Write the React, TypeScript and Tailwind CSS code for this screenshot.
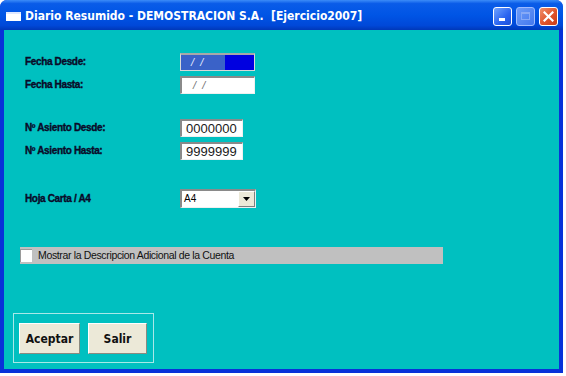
import React from "react";

const Label = ({ children }: { children: React.ReactNode }) => (
  <div
    className="w-[155px] shrink-0 text-[10px] font-bold text-[#0a0a28] leading-none tracking-[-0.35px] [-webkit-text-stroke:0.35px_#0a0a28]"
    style={{ fontFamily: '"Liberation Sans", Arial, sans-serif' }}
  >
    {children}
  </div>
);

const Sunken = ({ className, children }: { className: string; children?: React.ReactNode }) => (
  <div className={`border-t-2 border-l-2 border-t-[#8a8a8a] border-l-[#8a8a8a] border-b border-r border-b-[#f0f0f0] border-r-[#f0f0f0] ${className}`}>
    {children}
  </div>
);

export default function App() {
  return (
    <div className="w-[566px] h-[376px] bg-white" style={{ fontFamily: '"Liberation Sans", Arial, sans-serif' }}>
      <div className="w-[563px] h-[373px] flex flex-col rounded-t-[7px] bg-[#0831d9] overflow-hidden">
        {/* Title bar */}
        <div className="h-[30px] shrink-0 flex items-center bg-[linear-gradient(180deg,#3c8cf8_0%,#0a5ce8_12%,#0055e5_50%,#0048d8_85%,#0038b8_100%)] pl-[6px] pr-[4px]">
          <div className="w-[15px] h-[9px] bg-white border-t-2 border-t-[#dfe8ff] mt-[2px]" />
          <div className="ml-[4px] text-white text-[12px] font-bold whitespace-pre mt-[2px]" style={{ fontFamily: '"DejaVu Sans Condensed", "Liberation Sans", sans-serif' }}>
            Diario Resumido - DEMOSTRACION S.A.  [Ejercicio2007]
          </div>
          <div className="ml-auto flex gap-[4px] mt-[2px] mr-[1px]">
            <div className="w-[19px] h-[19px] rounded-[3px] border border-white bg-[linear-gradient(135deg,#6fa4ff,#2a64f0_60%,#1c4fd8)] flex items-end justify-start pl-[5px] pb-[4px]">
              <div className="w-[6px] h-[3px] bg-white" />
            </div>
            <div className="w-[19px] h-[19px] rounded-[3px] border border-[#9fbcff] bg-[linear-gradient(135deg,#6c9cf8,#4478ee)] flex items-center justify-center">
              <div className="w-[9px] h-[8px] border border-[#86a9f6] border-t-2" />
            </div>
            <div className="w-[19px] h-[19px] rounded-[3px] border border-white bg-[linear-gradient(135deg,#f0906c,#e0542c_55%,#c83c18)] flex items-center justify-center">
              <svg width="11" height="11" viewBox="0 0 11 11">
                <path d="M1.5 1.5 L9.5 9.5 M9.5 1.5 L1.5 9.5" stroke="white" strokeWidth="2.2" strokeLinecap="square" />
              </svg>
            </div>
          </div>
        </div>

        {/* Body */}
        <div className="flex-1 mx-[4px] mb-[4px] bg-[#00c0c0] pl-[21px] flex flex-col">
          {/* Fecha Desde */}
          <div className="flex items-center mt-[23px] h-[18px]">
            <Label>Fecha Desde:</Label>
            <div className="w-[75px] h-[18px] border border-t-2 border-[#d8d8d8] border-t-[#a8a8a8] bg-[#0000e0] flex">
              <div className="w-[44px] h-full bg-[#3a62c8] text-[#e8ecff] text-[11px] leading-[15px] pl-[10px] italic whitespace-pre">/  /</div>
            </div>
          </div>
          {/* Fecha Hasta */}
          <div className="flex items-center mt-[5px] h-[18px]">
            <Label>Fecha Hasta:</Label>
            <Sunken className="w-[75px] h-[18px] bg-white text-[#707070] text-[11px] leading-[15px] pl-[11px] italic whitespace-pre">/  /</Sunken>
          </div>
          {/* Asiento Desde */}
          <div className="flex items-center mt-[25px] h-[18px]">
            <Label>Nº Asiento Desde:</Label>
            <Sunken className="w-[63px] h-[18px] bg-white text-[#202020] text-[13px] leading-[15px] pl-[4px]">0000000</Sunken>
          </div>
          <div className="flex items-center mt-[5px] h-[18px]">
            <Label>Nº Asiento Hasta:</Label>
            <Sunken className="w-[63px] h-[18px] bg-white text-[#202020] text-[13px] leading-[15px] pl-[4px]">9999999</Sunken>
          </div>
          {/* Hoja */}
          <div className="flex items-center mt-[29px] h-[19px]">
            <Label>Hoja Carta / A4</Label>
            <Sunken className="w-[76px] h-[19px] bg-white flex items-stretch">
              <div className="flex-1 text-[10px] leading-[16px] pl-[2px] text-black">A4</div>
              <div className="w-[17px] bg-[#ece9d8] border-r border-b border-[#808080] border-l border-l-white border-t border-t-white flex items-center justify-center">
                <svg width="7" height="4" viewBox="0 0 7 4"><path d="M0 0 H7 L3.5 4 Z" fill="#000" /></svg>
              </div>
            </Sunken>
          </div>
          {/* Checkbox bar */}
          <div className="mt-[39px] ml-[-5px] w-[423px] h-[17px] bg-[#c0c0c0] flex items-center">
            <div className="w-[12px] h-[13px] bg-white border-t border-l border-[#9a9a9a]" />
            <div className="ml-[6px] text-[10.5px] text-[#101010] tracking-[-0.35px] leading-none">
              Mostrar la Descripcion Adicional de la Cuenta
            </div>
          </div>
          {/* Buttons frame */}
          <div className="mt-[49px] ml-[-12px] w-[141px] h-[50px] border border-[#a8e8e8] flex items-center gap-[8px] pl-[5px] pt-[1px]">
            <div className="w-[61px] h-[31px] bg-[#ece9d8] border-t border-l border-white border-b border-r border-b-[#8a8a80] border-r-[#8a8a80] flex items-center justify-center text-[12px] font-bold text-[#101010]" style={{ fontFamily: '"DejaVu Sans Condensed", "Liberation Sans", sans-serif' }}>
              Aceptar
            </div>
            <div className="w-[59px] h-[31px] bg-[#ece9d8] border-t border-l border-white border-b border-r border-b-[#8a8a80] border-r-[#8a8a80] flex items-center justify-center text-[12px] font-bold text-[#101010]" style={{ fontFamily: '"DejaVu Sans Condensed", "Liberation Sans", sans-serif' }}>
              Salir
            </div>
          </div>
        </div>
      </div>
    </div>
  );
}
